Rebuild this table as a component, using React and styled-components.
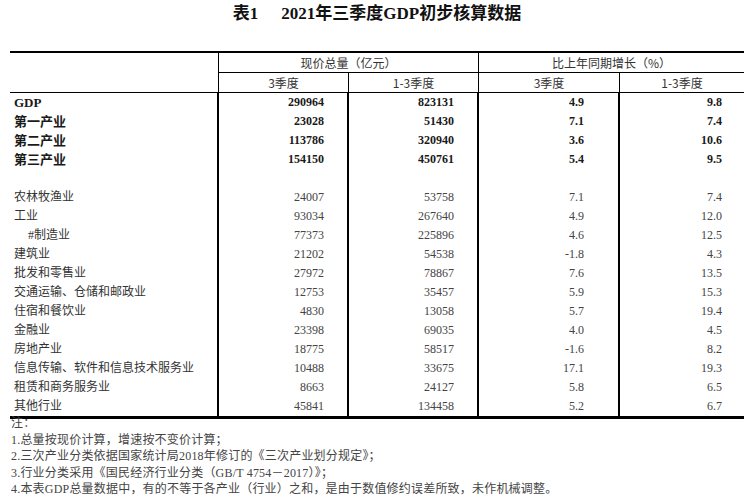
import React from 'react'
import styled, { createGlobalStyle } from 'styled-components'

const GlobalStyle = createGlobalStyle`
    html, body {
        margin: 0;
        padding: 0;
        background: #fff;
    }
    body {
        font-family: "Liberation Serif", "Noto Sans CJK SC", serif;
        color: #222;
    }
`

const rows = [
    { name: 'GDP', v: ['290964', '823131', '4.9', '9.8'], bold: true },
    { name: '第一产业', v: ['23028', '51430', '7.1', '7.4'], bold: true },
    { name: '第二产业', v: ['113786', '320940', '3.6', '10.6'], bold: true },
    { name: '第三产业', v: ['154150', '450761', '5.4', '9.5'], bold: true },
    { name: '', v: ['', '', '', ''] },
    { name: '农林牧渔业', v: ['24007', '53758', '7.1', '7.4'] },
    { name: '工业', v: ['93034', '267640', '4.9', '12.0'] },
    { name: '#制造业', v: ['77373', '225896', '4.6', '12.5'], indent: true },
    { name: '建筑业', v: ['21202', '54538', '-1.8', '4.3'] },
    { name: '批发和零售业', v: ['27972', '78867', '7.6', '13.5'] },
    { name: '交通运输、仓储和邮政业', v: ['12753', '35457', '5.9', '15.3'] },
    { name: '住宿和餐饮业', v: ['4830', '13058', '5.7', '19.4'] },
    { name: '金融业', v: ['23398', '69035', '4.0', '4.5'] },
    { name: '房地产业', v: ['18775', '58517', '-1.6', '8.2'] },
    { name: '信息传输、软件和信息技术服务业', v: ['10488', '33675', '17.1', '19.3'] },
    { name: '租赁和商务服务业', v: ['8663', '24127', '5.8', '6.5'] },
    { name: '其他行业', v: ['45841', '134458', '5.2', '6.7'] },
]

const notes = [
    '注：',
    '1.总量按现价计算，增速按不变价计算；',
    '2.三次产业分类依据国家统计局2018年修订的《三次产业划分规定》；',
    '3.行业分类采用《国民经济行业分类（GB/T 4754－2017）》；',
    '4.本表GDP总量数据中，有的不等于各产业（行业）之和，是由于数值修约误差所致，未作机械调整。',
]

const padRight = [23, 23, 34, 22]

function App() {
    return (
        <Page>
            <GlobalStyle />
            <Title>
                <span>表1</span>
                <span>2021年三季度GDP初步核算数据</span>
            </Title>
            <Table>
                <colgroup>
                    <col style={{ width: 209 }} />
                    <col style={{ width: 130 }} />
                    <col style={{ width: 130 }} />
                    <col style={{ width: 141 }} />
                    <col style={{ width: 124 }} />
                </colgroup>
                <thead>
                    <tr>
                        <HeadCell rowSpan={2} $right $bottom />
                        <HeadCell colSpan={2} $right $bottom>现价总量（亿元）</HeadCell>
                        <HeadCell colSpan={2} $bottom>比上年同期增长（%）</HeadCell>
                    </tr>
                    <tr>
                        <HeadCell $right $bottom>3季度</HeadCell>
                        <HeadCell $right $bottom>1-3季度</HeadCell>
                        <HeadCell $right $bottom>3季度</HeadCell>
                        <HeadCell $bottom>1-3季度</HeadCell>
                    </tr>
                </thead>
                <tbody>
                    {rows.map((r, i) => (
                        <tr key={i}>
                            <LabelCell $bold={r.bold} $indent={r.indent}>{r.name}</LabelCell>
                            {r.v.map((val, j) => (
                                <NumCell key={j} $bold={r.bold} $last={j === 3} $pad={padRight[j]}>
                                    {val}
                                </NumCell>
                            ))}
                        </tr>
                    ))}
                </tbody>
            </Table>
            <Notes>
                {notes.map((n, i) => (
                    <NoteLine key={i}>{n}</NoteLine>
                ))}
            </Notes>
        </Page>
    )
}

export const Page = styled.div`
    width: 754px;
    padding: 0 0 0 10px;
    box-sizing: border-box;
`
export const Title = styled.h1`
    margin: 0;
    height: 51px;
    padding-top: 4px;
    box-sizing: border-box;
    display: flex;
    justify-content: center;
    gap: 23px;
    padding-right: 10px;
    font-family: "Liberation Serif", "Noto Sans CJK SC", serif;
    font-size: 17px;
    font-weight: 700;
    line-height: 20px;
    color: #111;
`
export const Table = styled.table`
    width: 734px;
    table-layout: fixed;
    border-collapse: separate;
    border-spacing: 0;
    border-top: 2px solid #000;
    border-bottom: 3px solid #000;
`
export const HeadCell = styled.th`
    box-sizing: border-box;
    height: 20px;
    padding: 0;
    font-family: "Noto Sans CJK SC", sans-serif;
    font-weight: 400;
    font-size: 12px;
    line-height: 18px;
    color: #333;
    text-align: center;
    vertical-align: middle;
    border-right: ${p => (p.$right ? '1px solid #000' : 'none')};
    border-bottom: ${p => (p.$bottom ? '1px solid #000' : 'none')};
`
export const LabelCell = styled.td`
    box-sizing: border-box;
    height: 19px;
    padding: 0 0 0 ${p => (p.$indent ? '18px' : '4px')};
    font-family: "Liberation Serif", "Noto Sans CJK SC", serif;
    font-size: ${p => (p.$bold ? '13px' : '12px')};
    font-weight: ${p => (p.$bold ? 700 : 400)};
    line-height: 19px;
    color: ${p => (p.$bold ? '#1a1a1a' : '#333')};
    white-space: nowrap;
    border-right: 2px solid #000;
`
export const NumCell = styled.td`
    box-sizing: border-box;
    height: 19px;
    padding: 0 ${p => p.$pad}px 0 0;
    font-family: "Liberation Serif", serif;
    font-size: 12px;
    font-weight: ${p => (p.$bold ? 700 : 400)};
    line-height: 19px;
    color: ${p => (p.$bold ? '#1a1a1a' : '#444')};
    text-align: right;
    border-right: ${p => (p.$last ? 'none' : '2px solid #000')};
`
export const Notes = styled.div`
    margin-top: -4px;
    padding-left: 1px;
`
export const NoteLine = styled.div`
    font-family: "Liberation Serif", "Noto Sans CJK SC", serif;
    font-size: 12px;
    letter-spacing: 0.2px;
    line-height: 16.6px;
    color: #444;
    white-space: nowrap;
`

export default App
